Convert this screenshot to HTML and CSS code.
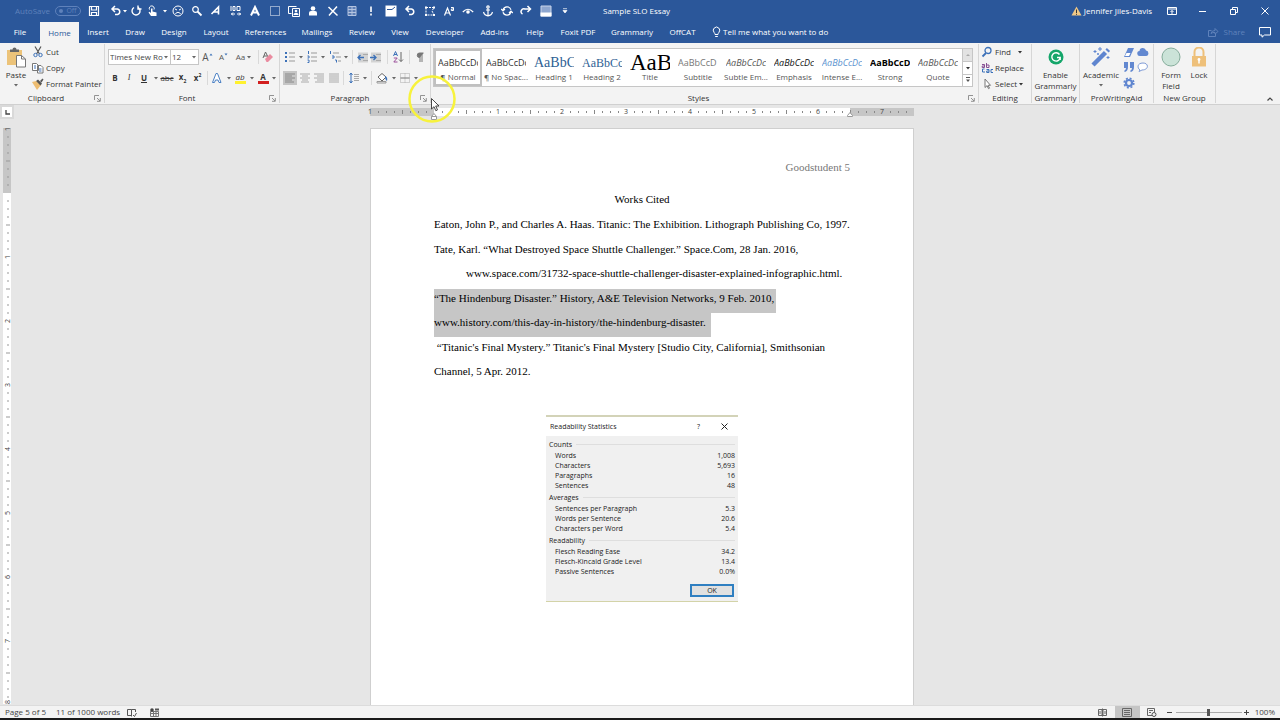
FILE: index.html
```
<!DOCTYPE html>
<html lang="en">
<head>
<meta charset="utf-8">
<title>Sample SLO Essay</title>
<link rel="stylesheet" href="styles.css">
</head>
<body>
<svg class="defs" aria-hidden="true">
  <symbol id="chev" viewBox="0 0 6 4"><path d="M1 1h4L3 3.4z" fill="currentColor"/></symbol>
  <symbol id="launch" viewBox="0 0 7 7"><path d="M.5 5V.5H5M3 3l3 3M6.300 3v3.300H3" fill="none" stroke="#888" stroke-width=".9"/></symbol>
  <symbol id="undo" viewBox="0 0 12 12"><path d="M2 4h5.500a2.800 2.800 0 0 1 0 5.500H5M5 1L2 4l3 3" fill="none" stroke="#fff" stroke-width="1.500"/></symbol>
</svg>

<header class="top">
  <div class="titlebar">
    <div class="autosave"><span>AutoSave</span><button class="toggle"><i></i>Off</button></div>
    <div class="qat-first">
      <button aria-label="Save"><svg width="12" height="12"><path d="M1.500 1.500h9v9h-9zM3.500 1.500v3.500h5V1.500M3.500 10.500V7.500h5v3" fill="none" stroke="#fff" stroke-width="1.200"/></svg></button>
      <button class="undo" aria-label="Undo"><svg width="12" height="12"><use href="#undo"/></svg></button>
      <button aria-label="Undo list"><svg width="6" height="4"><use href="#chev"/></svg></button>
      <button aria-label="Repeat"><svg width="12" height="12"><path d="M4 2.500a4 4 0 1 0 4.500.3M8 .5v3.500h3.500" fill="none" stroke="#fff" stroke-width="1.400"/></svg></button>
      <button aria-label="Touch mode"><svg width="12" height="12"><path d="M4 11L1.500 7.500l1-.8L4 8V3.500h1.500V6.500L9.500 7.500V11z" fill="#fff"/><path d="M2.500 4.500a2.500 2.500 0 1 1 4.500 0" fill="none" stroke="#fff"/></svg></button>
      <button aria-label="Touch list"><svg width="6" height="4"><use href="#chev"/></svg></button>
    </div>
    <div class="qat">
      <button aria-label="Frown"><svg width="12" height="12"><g fill="none" stroke="#fff"><circle cx="6" cy="6" r="5"/><path d="M3.500 9a2.700 2.700 0 0 1 5 0M3 4l2 1M9 4L7 5"/></g></svg></button>
      <button aria-label="Find"><svg width="12" height="12"><circle cx="4.500" cy="4.500" r="2.800" fill="none" stroke="#fff" stroke-width="1.200"/><path d="M6.500 6.500l4 4" stroke="#fff" stroke-width="1.800"/></svg></button>
      <button aria-label="Text effects"><svg width="12" height="12"><path d="M1.500 9L8.500 2v7.500M4 7h4.500" fill="none" stroke="#fff" stroke-width="1.600"/></svg></button>
      <button aria-label="Character spacing"><svg width="12" height="12"><g fill="none" stroke="#fff"><path d="M1 1v5M3 1.500h2v4H3zM7 1.500h3v4H7zM1 9h4M7 9h4M3 7.500L1.500 9 3 10.500M9 7.500L10.500 9 9 10.500"/></g></svg></button>
      <button aria-label="Font"><svg width="12" height="12"><path d="M2 10.500L6 2l4 8.500M4 7.500h4" fill="none" stroke="#fff" stroke-width="2"/></svg></button>
      <button aria-label="Select area"><svg width="12" height="12"><path d="M1.500 1.500h9v9h-9z" fill="none" stroke="#fff" stroke-dasharray="1 1"/></svg></button>
      <button aria-label="Contact card"><svg width="12" height="12"><path d="M3.500 8.500h-3v-7h8M4.500 3.500h7v8h-7z" fill="none" stroke="#fff"/><circle cx="8" cy="6" r="1.300" fill="#fff"/><path d="M5.500 10c0-3 5-3 5 0z" fill="#fff"/></svg></button>
      <button aria-label="Account"><svg width="12" height="12"><circle cx="6" cy="3.500" r="2.300" fill="#fff"/><path d="M2 10.500V8q0-2 2-2h4q2 0 2 2v2.500z" fill="#fff"/></svg></button>
      <button aria-label="Delete"><svg width="12" height="12"><path d="M1.500 2l9 8.500M10 1.500L2 10.500" stroke="#fff" stroke-width="1.500"/></svg></button>
      <button aria-label="Table"><svg width="12" height="12"><path d="M2 1.500h8v9H2zM2 4.500h8M2 7.500h8M6 1.500v9" fill="#5d7eb5" stroke="#b4c4e0"/></svg></button>
      <button aria-label="Important"><svg width="12" height="12"><path d="M6 1.500v5.500M6 8.500v2" stroke="#fff" stroke-width="1.600"/></svg></button>
      <button aria-label="Window"><svg width="12" height="12"><path d="M.5.500h11v11H.5z" fill="#fff"/><path d="M2 4.500h5l3-2.500" fill="none" stroke="#2b579a"/></svg></button>
      <button aria-label="Undo move"><svg width="12" height="12"><use href="#undo"/></svg></button>
      <button aria-label="Edit points"><svg width="12" height="12"><path d="M2 2.500h8L8 6l2 4H2z" fill="none" stroke="#fff" stroke-dasharray="2 1"/><path d="M1 1.500h2v2H1zM9 1.500h2v2H9zM1 9h2v2H1zM9 9h2v2H9z" fill="#fff"/></svg></button>
      <button aria-label="Superscript"><svg width="12" height="12"><path d="M1.500 10.500L4.500 3l3 7.500M2.500 8h4" fill="none" stroke="#fff" stroke-width="1.200"/><path d="M8 2.500h2.500v3H8.300V4h2" fill="none" stroke="#fff"/></svg></button>
      <button aria-label="View"><svg width="12" height="12"><path d="M.8 7Q6 1.500 11.200 7" fill="none" stroke="#fff" stroke-width="1.200"/><circle cx="6" cy="7" r="1.800" fill="#fff"/></svg></button>
      <button aria-label="Anchor"><svg width="12" height="12"><g fill="none" stroke="#fff" stroke-width="1.200"><circle cx="6" cy="2" r="1.200"/><path d="M6 3.500v7M4 5h4M1.500 7q1 3.500 4.500 3.800Q9.500 10.500 10.500 7"/></g></svg></button>
      <button aria-label="Refresh"><svg width="12" height="12"><path d="M2 5a4.200 4.200 0 0 1 8-.3M10 7a4.200 4.200 0 0 1-8 .3M0 4l2 2 2-2M8 8l2-2 2 2" fill="none" stroke="#fff" stroke-width="1.200"/></svg></button>
      <button aria-label="Redo"><svg width="12" height="12"><path d="M10 4H5a2.800 2.800 0 0 0-2.500 5M7.500 1l3 3-3 3" fill="none" stroke="#fff" stroke-width="1.500"/></svg></button>
      <button aria-label="Footer"><svg width="12" height="12"><path d="M1 1h10v10H1z" fill="#8ea7d0" stroke="#c9d5ea"/><path d="M.5 7.500h11v4H.5z" fill="#fff"/></svg></button>
      <button aria-label="Customize toolbar"><svg width="6" height="6"><path d="M1 .7h4M1 2.500h4L3 5z" stroke="#fff" stroke-width=".7" fill="#fff"/></svg></button>
    </div>
    <div class="doc-title">Sample SLO Essay</div>
    <div class="user"><svg width="11" height="10"><path d="M5.500.5L10.500 9.500H.5z" fill="#f0c886"/><path d="M5.500 3.500V7M5.500 7.800v1" stroke="#333"/></svg><span>Jennifer Jiles-Davis</span></div>
    <div class="winbtns">
      <button aria-label="Ribbon options"><svg width="10" height="8"><path d="M.5.500h9v7h-9zM.5 2h9M5 7V3.500M3.500 5L5 3.500 6.500 5" fill="none" stroke="#fff"/></svg></button>
      <button aria-label="Minimize"><svg width="8" height="8"><path d="M0 4.500h7" stroke="#fff"/></svg></button>
      <button aria-label="Restore"><svg width="8" height="8"><path d="M.5 2.500h5v5h-5zM2.500 2.500v-2h5v5h-2" fill="none" stroke="#fff"/></svg></button>
      <button aria-label="Close"><svg width="8" height="8"><path d="M.5.500l7 7M7.500.5l-7 7" stroke="#fff"/></svg></button>
    </div>
  </div>
  <nav class="tabs">
    <div class="tablist">
      <button>File</button><button class="active">Home</button><button>Insert</button><button>Draw</button><button>Design</button><button>Layout</button><button>References</button><button>Mailings</button><button>Review</button><button>View</button><button>Developer</button><button>Add-ins</button><button>Help</button><button>Foxit PDF</button><button>Grammarly</button><button>OffCAT</button>
    </div>
    <button class="tellme"><svg width="9" height="12"><path d="M3 8.500Q3 7.500 2 6.300a3.200 3.200 0 1 1 5 0Q6 7.500 6 8.500zM3.200 10.500h2.600" fill="none" stroke="#fff"/></svg>Tell me what you want to do</button>
    <button class="share"><svg width="11" height="10"><path d="M3.500 3.500h-3v6h7V7M3 6.500Q3.500 3.500 7 3.500V1.500L10 4.500 7 7V5.500Q4.500 5.200 3 6.500z" fill="none" stroke="#5f82bb"/></svg>Share</button>
    <button class="comment" aria-label="Comments"><svg width="12" height="11"><path d="M.5.500h11v7.500H5.500L3 10.200V8H.5z" fill="none" stroke="#fff"/></svg></button>
  </nav>
</header>

<section class="ribbon">
  <div class="group clipboard">
    <div class="body">
      <button class="big"><svg width="20" height="21"><path d="M1 3h15v15H1z" fill="#ecc379"/><path d="M4 2.500h2.500a2 2 0 0 1 4 0H13V5H4z" fill="#666"/><path d="M10.500 8.500h5l4 3.500v8h-9z" fill="#fff" stroke="#777"/><path d="M15.500 8.500V12h4" fill="none" stroke="#777"/></svg><span>Paste</span><svg class="cv" width="6" height="4"><use href="#chev"/></svg></button>
      <div class="smalls">
        <button><svg width="12" height="12"><path d="M3 .5L7.500 8M9 .5L4.500 8" stroke="#555" stroke-width="1.200"/><g fill="none" stroke="#3c71b8"><circle cx="3.500" cy="9" r="1.700"/><circle cx="8.500" cy="9" r="1.700"/></g></svg>Cut</button>
        <button><svg width="12" height="12"><path d="M.5 1.500h4l2 2v5h-6zM5.500 3.500h3.500l2 2v5.500h-5.500z" fill="#fff" stroke="#777"/><path d="M2 4h2M2 6h2M7 7h2.500M7 9h2.500" stroke="#3c71b8"/></svg>Copy</button>
        <button><svg width="12" height="12"><path d="M0 4l4-1 5 4-4 5z" fill="#edbd72"/><path d="M4 3l2-1.500 4 4L8.500 7.500zM8 3l2.500-2.500 1 1L9.500 4.500z" fill="#555"/></svg>Format Painter</button>
      </div>
    </div>
    <footer>Clipboard<svg width="7" height="7"><use href="#launch"/></svg></footer>
  </div>

  <div class="group font">
    <div class="body rows">
      <div class="row font-top">
        <label class="combo"><select aria-label="Font"><option>Times New Ro</option></select><svg width="6" height="4"><use href="#chev"/></svg></label>
        <label class="combo size"><select aria-label="Font size"><option>12</option></select><svg width="6" height="4"><use href="#chev"/></svg></label>
        <button class="lt" aria-label="Grow font">A<svg width="4" height="8"><path d="M.5 2.500L2 .5l1.500 2z" fill="#3c71b8"/></svg></button>
        <button class="lt sm" aria-label="Shrink font">A<svg width="4" height="8"><path d="M.5.500L2 2.500 3.500.5z" fill="#3c71b8"/></svg></button>
        <button class="lt sm">Aa<svg width="8" height="4"><use href="#chev"/></svg></button>
        <i class="sep"></i>
        <button aria-label="Clear formatting"><svg width="12" height="12"><path d="M1 7L3.500 1 6 6M2 5h3" fill="none" stroke="#666"/><path d="M3 8l5-5 3 3-5 5H4.500z" fill="#ea8ba0"/></svg></button>
      </div>
      <div class="row font-bottom">
        <button><b>B</b></button><button><em>I</em></button><button><u>U</u></button><button aria-label="Underline styles"><svg width="6" height="4"><use href="#chev"/></svg></button>
        <button><s>abc</s></button><button><b>x<sub>2</sub></b></button><button><b>x<sup>2</sup></b></button><i class="sep"></i>
        <button aria-label="Text effects"><svg width="12" height="12"><path d="M1.500 10.500L5 1.500h1.500L10 10.500H8L7 8H4.500l-1 2.500z" fill="#fff" stroke="#4a80c4"/></svg></button><button aria-label="Effects list"><svg width="6" height="4"><use href="#chev"/></svg></button>
        <button class="mark" aria-label="Highlight">ab</button><button aria-label="Highlight list"><svg width="6" height="4"><use href="#chev"/></svg></button>
        <button class="mark red" aria-label="Font color">A</button><button aria-label="Color list"><svg width="6" height="4"><use href="#chev"/></svg></button>
      </div>
    </div>
    <footer>Font<svg width="7" height="7"><use href="#launch"/></svg></footer>
  </div>

  <div class="group paragraph">
    <div class="body rows">
      <div class="row para-top">
        <button aria-label="Bullets"><svg width="10" height="12"><path d="M0 2h2M0 6h2M0 10h2" stroke="#3c71b8" stroke-width="2"/><path d="M4 2h6M4 6h6M4 10h6" stroke="#999"/></svg></button><button aria-label="Bullet list"><svg width="6" height="4"><use href="#chev"/></svg></button>
        <button aria-label="Numbering"><svg width="10" height="12"><path d="M1.500 0v3M.5 5h1.500v2H.5M.5 9h1.500v2.500H.5" stroke="#3c71b8" fill="none"/><path d="M4 2h6M4 6h6M4 10h6" stroke="#999"/></svg></button><button aria-label="Number list"><svg width="6" height="4"><use href="#chev"/></svg></button>
        <button aria-label="Multilevel"><svg width="12" height="12"><path d="M1.500 0v3M3 5h2v2H3M6 9h1.500v2.500" stroke="#3c71b8" fill="none"/><path d="M4 2h6M7 6h5M9 10h3" stroke="#999"/></svg></button><button aria-label="Multilevel list"><svg width="6" height="4"><use href="#chev"/></svg></button>
        <i class="sep"></i>
        <button aria-label="Decrease indent"><svg width="12" height="11"><path d="M1 .5h10v10H1z" fill="#d3d3d3"/><path d="M6 2.500h5M6 8.500h5" stroke="#aaa"/><path d="M7 5.500H1M3.500 3L1 5.500 3.500 8" fill="none" stroke="#3c71b8" stroke-width="1.300"/></svg></button>
        <button aria-label="Increase indent"><svg width="12" height="11"><path d="M1 .5h10v10H1z" fill="#d3d3d3"/><path d="M6 2.500h5M6 8.500h5" stroke="#aaa"/><path d="M0 5.500h6M3.500 3L6 5.500 3.500 8" fill="none" stroke="#3c71b8" stroke-width="1.300"/></svg></button>
        <i class="sep"></i>
        <button aria-label="Sort"><svg width="11" height="12"><path d="M.5 5l2-4.500 2 4.500M1 3.500h3" fill="none" stroke="#3c71b8"/><path d="M.8 7h3.400L.8 11h3.700" fill="none" stroke="#9a4f9a"/><path d="M8 1v9.500M6 8.500l2 2 2-2" fill="none" stroke="#666"/></svg></button>
        <i class="sep"></i>
        <button aria-label="Show marks"><svg width="8" height="11"><path d="M4 1v9M6 1v9M7.500 1H3.500a2 2 0 0 0 0 4.500H4" fill="#777" stroke="#777"/></svg></button>
      </div>
      <div class="row para-bottom">
        <button class="on" aria-label="Align left"><svg width="10" height="10"><path d="M0 1h10M0 3h7M0 5h10M0 7h7M0 9h9" stroke="#888"/></svg></button>
        <button aria-label="Center"><svg width="10" height="10"><path d="M0 1h10M2 3h6M0 5h10M2 7h6M1 9h8" stroke="#aaa"/></svg></button>
        <button aria-label="Align right"><svg width="10" height="10"><path d="M0 1h10M3 3h7M0 5h10M3 7h7M1 9h9" stroke="#aaa"/></svg></button>
        <button aria-label="Justify"><svg width="10" height="10"><path d="M0 1h10M0 3h10M0 5h10M0 7h10M0 9h10" stroke="#aaa"/></svg></button>
        <i class="sep"></i>
        <button aria-label="Line spacing"><svg width="10" height="12"><path d="M2 1v10M.5 3L2 1l1.500 2M.5 9L2 11l1.500-2" fill="none" stroke="#3c71b8"/><path d="M5 2.500h5M5 4.500h5M5 6.500h5M5 8.500h5" stroke="#aaa"/></svg></button><button aria-label="Spacing list"><svg width="6" height="4"><use href="#chev"/></svg></button>
        <i class="sep"></i>
        <button aria-label="Shading"><svg width="12" height="12"><path d="M2 5l4-3.500L10 5 6 9z" fill="#fff" stroke="#666"/><path d="M9 4q3 1 2 5Q9 8 9 4z" fill="#3c71b8"/><path d="M1 9.500h9v1.500H1z" fill="none" stroke="#999"/></svg></button><button aria-label="Shading list"><svg width="6" height="4"><use href="#chev"/></svg></button>
        <button aria-label="Borders"><svg width="10" height="10"><path d="M.5.500h9v9h-9zM5 .5v9" fill="none" stroke="#aaa" stroke-dasharray="1 1"/><path d="M.5 5h9" stroke="#777"/></svg></button><button aria-label="Borders list"><svg width="6" height="4"><use href="#chev"/></svg></button>
      </div>
    </div>
    <footer>Paragraph<svg width="7" height="7"><use href="#launch"/></svg></footer>
  </div>

  <div class="group styles">
    <div class="gallery">
      <button class="picked"><span>AaBbCcDc</span><small>¶ Normal</small></button>
      <button><span>AaBbCcDc</span><small>¶ No Spac...</small></button>
      <button><span class="h1">AaBbC</span><small>Heading 1</small></button>
      <button><span class="h2">AaBbCcl</span><small>Heading 2</small></button>
      <button><span class="ti">AaB</span><small>Title</small></button>
      <button><span class="gray">AaBbCcD</span><small>Subtitle</small></button>
      <button><span class="it">AaBbCcDc</span><small>Subtle Em...</small></button>
      <button><span class="it dark">AaBbCcDc</span><small>Emphasis</small></button>
      <button><span class="it blue">AaBbCcDc</span><small>Intense E...</small></button>
      <button><span class="st">AaBbCcDc</span><small>Strong</small></button>
      <button><span class="it">AaBbCcDc</span><small>Quote</small></button>
      <div class="gscroll">
        <button class="off" aria-label="Previous styles"><svg width="6" height="4"><path d="M1 3h4L3 1z" fill="#aaa"/></svg></button>
        <button aria-label="Next styles"><svg width="6" height="4"><use href="#chev"/></svg></button>
        <button aria-label="More styles"><svg width="6" height="6"><path d="M1 .5h4" stroke="#555"/><path d="M1 2.500h4L3 5z" fill="#555"/></svg></button>
      </div>
    </div>
    <footer>Styles<svg width="7" height="7"><use href="#launch"/></svg></footer>
  </div>

  <div class="group editing">
    <div class="body smalls">
      <button><svg width="12" height="12"><circle cx="7" cy="4.500" r="3" fill="none" stroke="#3c71b8" stroke-width="1.300"/><path d="M5 7L1.500 10.500" stroke="#3c71b8" stroke-width="1.800"/></svg>Find<svg class="far" width="6" height="4"><use href="#chev"/></svg></button>
      <button><svg width="12" height="12"><path d="M1 2.500h2.500v3H1.200V4h2.300M5.500 1v4.500H8V3H5.500" fill="none" stroke="#874f93"/><path d="M5.500 7.500H8v3H5.700V9H8M12 7.500h-2v3h2M3.500 7H1.500v3H4" fill="none" stroke="#3c71b8"/></svg>Replace</button>
      <button><svg width="12" height="12"><path d="M4 1v8.500l2-1.800 1.500 3 1-.5L7 7.300h2.500z" fill="#fff" stroke="#777"/></svg>Select<svg class="near" width="6" height="4"><use href="#chev"/></svg></button>
    </div>
    <footer>Editing</footer>
  </div>

  <div class="group gram">
    <div class="body">
      <button class="big"><svg width="20" height="21"><circle cx="10" cy="10" r="7.500" fill="#15a66a"/><path d="M13.500 7.500a4.200 4.200 0 1 0 .7 3H11M14.200 10.500v2.500" fill="none" stroke="#fff" stroke-width="1.400"/></svg><span>Enable<br>Grammarly</span></button>
    </div>
    <footer>Grammarly</footer>
  </div>

  <div class="group pwa">
    <div class="body">
      <button class="big"><svg width="20" height="21"><path d="M2 18L14.500 5.500" stroke="#5f85cf" stroke-width="4.500"/><path d="M16 4l1.500-1.500" stroke="#5f85cf" stroke-width="4.500"/><path d="M4 3v3M2.500 4.500h3M9 0v4M7 2h4M17 9v3M15.500 10.500h3M7 6v2M6 7h2" stroke="#5f85cf"/></svg><span>Academic</span><svg class="cv" width="6" height="4"><use href="#chev"/></svg></button>
      <div class="tools">
        <button aria-label="Eraser"><svg width="12" height="11"><path d="M5 1h6L7 10H1z" fill="#6288d0"/><path d="M3.500 6L2 9h4l1.500-3z" fill="#fff"/></svg></button>
        <button aria-label="Cloud"><svg width="12" height="10"><path d="M3 9a2.500 2.500 0 0 1-.5-5A3.300 3.300 0 0 1 9 3.500 2.800 2.800 0 0 1 9.300 9z" fill="#6288d0"/></svg></button>
        <button aria-label="Quotes"><svg width="12" height="10"><path d="M1 0h4v5q0 4-3 5l-1-1q2-1 2-3H1zM7 0h4v5q0 4-3 5l-1-1q2-1 2-3H7z" fill="#6288d0"/></svg></button>
        <button aria-label="Chat"><svg width="12" height="10"><path d="M3 8L2 9.500 5 8C12 8 12 1 6 1S0 6 3 8z" fill="#fff" stroke="#7d9ad6"/></svg></button>
        <button aria-label="Settings"><svg width="12" height="12"><circle cx="6" cy="6" r="3" fill="none" stroke="#5f85cf" stroke-width="2.200"/><circle cx="6" cy="6" r="4.800" fill="none" stroke="#5f85cf" stroke-width="1.600" stroke-dasharray="2 1.770"/></svg></button>
      </div>
    </div>
    <footer>ProWritingAid</footer>
  </div>

  <div class="group newgroup">
    <div class="body">
      <button class="big"><svg width="20" height="21"><circle cx="10" cy="10" r="9" fill="#cbe3d8" stroke="#86ad9c"/></svg><span>Form<br>Field</span></button>
      <button class="big"><svg width="20" height="21"><path d="M5.500 9V5a4.500 4.500 0 0 1 9 0v4" fill="none" stroke="#eec07a" stroke-width="2"/><path d="M3 9h14v10.500H3z" fill="#eec07a"/><path d="M10 12v4.500" stroke="#fff" stroke-width="1.500"/><circle cx="10" cy="12.500" r="1.400" fill="#fff"/></svg><span>Lock</span></button>
    </div>
    <footer>New Group</footer>
  </div>
  <button class="collapse" aria-label="Collapse ribbon"><svg width="6" height="4"><path d="M.5 3.500L3 1l2.500 2.500" fill="none" stroke="#444" stroke-width="1.200"/></svg></button>
</section>

<main class="workspace">
  <div class="vside">
    <button class="tabstop" aria-label="Tab selector"><svg width="5" height="5"><path d="M1 0v4h4" fill="none" stroke="#444" stroke-width="1.300"/></svg></button>
    <svg class="vruler" width="8" height="576">
      <defs><pattern id="vt" width="8" height="64" patternUnits="userSpaceOnUse" y="1"><path d="M4 8h2M4 16h2M4 24h2M3 32h4M4 40h2M4 48h2M4 56h2" stroke="#999"/></pattern></defs>
      <path d="M0 0h8v65H0z" fill="#c6c6c6"/><path d="M0 65h8v511H0z" fill="#fff"/><path d="M0 0h8v576H0z" fill="url(#vt)"/>
      <g transform="rotate(-90)"><text x="-1" y="7">1</text><text x="-129" y="7">1</text><text x="-193" y="7">2</text><text x="-257" y="7">3</text><text x="-321" y="7">4</text><text x="-385" y="7">5</text><text x="-449" y="7">6</text><text x="-513" y="7">7</text><text x="-574" y="7">8</text></g>
    </svg>
  </div>
  <div class="canvas">
    <svg class="hruler" width="544" height="15">
      <defs><pattern id="ht" width="64" height="15" patternUnits="userSpaceOnUse"><path d="M8.500 6v2M16.500 6v2M24.500 6v2M32.500 5v4M40.500 6v2M48.500 6v2M56.500 6v2" stroke="#888"/></pattern></defs>
      <path d="M0 3h544v8H0z" fill="#c6c6c6"/><path d="M64 3h416v8H64z" fill="#fff"/><path d="M0 3h544v8H0z" fill="url(#ht)"/>
      <text x="0" y="9">1</text><text x="128" y="9">1</text><text x="192" y="9">2</text><text x="256" y="9">3</text><text x="320" y="9">4</text><text x="384" y="9">5</text><text x="448" y="9">6</text><text x="512" y="9">7</text>
      <path d="M61.500 14.500v-3L64 8.500l2.500 3v3zM61.500 11.500h5M477.500 11.500v-1L480 7.500l2.500 3v1z" fill="#fff" stroke="#999"/>
    </svg>
    <article class="page">
      <div class="page-header">Goodstudent 5</div>
      <h1>Works Cited</h1>
      <p>Eaton, John P., and Charles A. Haas. Titanic: The Exhibition. Lithograph Publishing Co, 1997.</p>
      <p class="hang">Tate, Karl. “What Destroyed Space Shuttle Challenger.” Space.Com, 28 Jan. 2016,<br>www.space.com/31732-space-shuttle-challenger-disaster-explained-infographic.html.</p>
      <p class="selected"><mark>“The Hindenburg Disaster.” History, A&amp;E Television Networks, 9 Feb. 2010,</mark><mark class="end">www.history.com/this-day-in-history/the-hindenburg-disaster.</mark></p>
      <p>&nbsp;“Titanic's Final Mystery.” Titanic's Final Mystery [Studio City, California], Smithsonian<br>Channel, 5 Apr. 2012.</p>
      <section class="dialog">
        <div class="dtitle"><span>Readability Statistics</span><button aria-label="Help">?</button><button aria-label="Close"><svg width="7" height="7"><path d="M.5.500l6 6M6.500.5l-6 6" stroke="#222"/></svg></button></div>
        <table>
          <tbody><tr><th colspan="2"><span>Counts</span></th></tr>
          <tr><td>Words</td><td>1,008</td></tr><tr><td>Characters</td><td>5,693</td></tr><tr><td>Paragraphs</td><td>16</td></tr><tr><td>Sentences</td><td>48</td></tr></tbody>
          <tbody><tr><th colspan="2"><span>Averages</span></th></tr>
          <tr><td>Sentences per Paragraph</td><td>5.3</td></tr><tr><td>Words per Sentence</td><td>20.6</td></tr><tr><td>Characters per Word</td><td>5.4</td></tr></tbody>
          <tbody><tr><th colspan="2"><span>Readability</span></th></tr>
          <tr><td>Flesch Reading Ease</td><td>34.2</td></tr><tr><td>Flesch-Kincaid Grade Level</td><td>13.4</td></tr><tr><td>Passive Sentences</td><td>0.0%</td></tr></tbody>
        </table>
        <button class="ok">OK</button>
      </section>
    </article>
  </div>
</main>

<footer class="status">
  <span>Page 5 of 5</span><span>11 of 1000 words</span>
  <button aria-label="Proofing"><svg width="10" height="9"><path d="M4.500 1.500H.5v6h4M4.500 1.500v7M4.500 1.500h4V4M6 7l1.500 1.500L9.500 5" fill="none" stroke="#555"/></svg></button>
  <button class="macro" aria-label="Macros"><svg width="9" height="9"><path d="M.5 3.500h8v5h-8zM.5 5.500h8M3.500 3.500v5M6 3.500v5" fill="none" stroke="#777"/><circle cx="2" cy="2" r="1.800" fill="#444"/><path d="M5 1.500h4" stroke="#555" stroke-width="2"/></svg></button>
  <div class="views">
    <button aria-label="Read mode"><svg width="9" height="9"><path d="M.5 1.500h3.500v6H.5zM5 1.500h3.500v6H5zM4.500.5v8M2 3v3M7 3v3" fill="none" stroke="#666"/></svg></button>
    <button class="on" aria-label="Print layout"><svg width="10" height="9"><path d="M.5.500h9v8h-9zM2 2.500h6M2 4.500h6M2 6.500h6" fill="none" stroke="#666"/></svg></button>
    <button aria-label="Web layout"><svg width="10" height="9"><path d="M5 7.500H.5v-7h7V4M2 2.500h4M2 4.500h2" fill="none" stroke="#666"/><circle cx="7" cy="6.500" r="2" fill="none" stroke="#555"/></svg></button>
  </div>
  <button class="zm" aria-label="Zoom out"><svg width="5" height="5"><path d="M0 2.500h5" stroke="#444"/></svg></button>
  <input type="range" min="0" max="100" value="50" aria-label="Zoom">
  <button class="zm" aria-label="Zoom in"><svg width="5" height="5"><path d="M0 2.500h5M2.500 0v5" stroke="#444"/></svg></button>
  <span class="pct">100%</span>
</footer>

<svg class="pointer" width="48" height="48" aria-hidden="true"><circle cx="24" cy="24" r="22.500" fill="none" stroke="#f7f23c" stroke-width="2.500"/><path d="M23.500 23.500v10.500l2.500-2.300 1.800 4 1.700-.8-1.800-3.900h3.300z" fill="#fff" stroke="#333" stroke-width=".9"/></svg>
</body>
</html>
```
FILE: styles.css
```
* { box-sizing: border-box; }
body {
  margin: 0; height: 100vh; display: flex; flex-direction: column; overflow: hidden;
  background: #e6e6e6; color: #333; position: relative;
  font: 8px/10px "Open Sans", "Noto Sans", sans-serif;
}
button { border: 0; padding: 0; margin: 0; background: none; font: inherit; color: inherit; display: flex; align-items: center; justify-content: center; white-space: nowrap; }
svg { display: block; flex: none; }
.defs { position: absolute; width: 0; height: 0; }

.top { background: #2b579a; color: #fff; flex: none; }
.titlebar { height: 22px; display: flex; align-items: center; }
.autosave { width: 83px; padding-left: 15px; display: flex; align-items: center; gap: 5px; color: #5f82bb; }
.toggle { width: 26px; height: 10px; border: 1px solid #5f82bb; border-radius: 5px; font-size: 7px; gap: 3px; }
.toggle i { width: 4px; height: 4px; border-radius: 2px; background: #5f82bb; }
.qat-first { display: grid; grid-template-columns: 22px 17px 6px 16px 17px 7px; }
.qat-first .undo { justify-content: flex-end; }
.qat { width: 407px; display: flex; justify-content: space-between; }
.qat button { width: 20px; }
.doc-title { margin-left: 28px; flex: 1; }
.user { display: flex; align-items: center; gap: 2px; margin-right: 4px; }
.winbtns { display: grid; grid-template-columns: repeat(4, 31px); }
.tabs { height: 21px; display: flex; align-items: center; padding-bottom: 1px; }
.tablist { display: grid; grid-template-columns: 40px 39px 38px 36px 42px 42px 57px 46px 44px 32px 58px 41px 40px 46px 62px 39px; align-self: stretch; }
.tablist .active { background: #f3f3f3; color: #2b579a; margin-bottom: -1px; }
.tellme { margin-left: 10px; gap: 2px; margin-right: auto; }
.share { gap: 5px; color: #5f82bb; margin-right: 14px; }
.comment { margin-right: 9px; }

.ribbon { background: #f3f3f3; height: 62px; flex: none; display: flex; border-bottom: 1px solid #d0d0d0; padding: 1px 0; }
.group { display: flex; flex-direction: column; border-right: 1px solid #d6d6d6; }
.group .body { flex: 1; display: flex; }
.group > footer { height: 11px; margin-top: auto; display: flex; align-items: center; justify-content: center; position: relative; }
.group > footer svg { position: absolute; right: 3px; bottom: 1px; }
.clipboard { width: 105px; }
.clipboard > footer { padding-right: 12px; }
.font { width: 175px; }
.font > footer, .paragraph > footer { padding-right: 10px; }
.paragraph { width: 151px; }
.styles { flex: 1; padding-left: 2px; }
.styles > footer { padding-right: 14px; }
.editing { width: 53px; }
.gram { width: 48px; }
.pwa { width: 74px; }
.newgroup { width: 62px; }
.big { flex-direction: column; justify-content: flex-start; text-align: center; padding-top: 3px; line-height: 11px; }
.big span { margin-top: 1px; }
.big .cv { margin-top: 3px; color: #666; }
.clipboard .big { width: 32px; }
.smalls { display: flex; flex-direction: column; }
.smalls, .group .body.smalls { flex-direction: column; }
.smalls button { height: 16px; justify-content: flex-start; gap: 2px; }
.smalls button:last-child { height: 15px; }
.editing .smalls { padding-left: 2px; }
.smalls .far { margin-left: 4px; }
.smalls .near { margin-left: -1px; }
.gram .big, .pwa .big { flex: 1; }
.tools { display: grid; grid-template-columns: 14px 14px; grid-template-rows: 14px 16px 15px; margin: 1px 3px 0 0; }
.newgroup .big { width: 28px; }
.newgroup .body { padding-left: 3px; }
.newgroup + .collapse { width: 57px; justify-content: flex-end; margin: auto 7px 2px auto; }

.group .rows { flex-direction: column; padding-left: 3px; }
.row { display: grid; height: 20px; align-items: center; }
.row:first-child { padding-top: 2px; height: 24px; }
.row svg { color: #666; }
.font-top { grid-template-columns: 63px 28px 17px 15px 27px 1px 18px; }
.font-bottom { grid-template-columns: 14px 14px 16px 7px 16px 15px 15px 4px 16px 7px 16px 7px 16px 6px; }
.para-top { grid-template-columns: 14px 8px 14px 8px 16px 6px 7px 13px 14px 8px 14px 8px 14px; }
.para-bottom { grid-template-columns: 14px 15px 14px 15px 5px 16px 6px 6px 16px 7px 16px 6px; }
.sep { width: 1px; height: 14px; background: #d9d9d9; justify-self: center; }
.combo { position: relative; height: 16px; border: 1px solid #c6c6c6; background: #fff; display: flex; }
.combo.size { margin-left: -1px; }
.combo select { appearance: none; border: 0; margin: 0; padding: 0 0 0 1px; width: 100%; background: none; font: inherit; color: #444; }
.combo svg { position: absolute; right: 1px; top: 5px; }
.lt { font-size: 10px; color: #555; }
.lt.sm { font-size: 8px; }
.row b, .row em, .row u { font-size: 8px; }
.row u { font-weight: 700; }
.row em { font-family: "Liberation Serif", serif; }
.row sub, .row sup { font-size: 5px; line-height: 1; }
.row .mark { border-bottom: 3px solid #fff12e; line-height: 8px; font-style: italic; justify-self: center; width: 11px; height: 12px; }
.row .mark.red { border-color: #d21f1f; font-style: normal; font-weight: 700; }
.on { background: #c5c5c5; align-self: stretch; }
.row .on { height: 14px; align-self: center; }

.gallery { margin-top: 4px; height: 39px; border: 1px solid #c6c6c6; background: #fff; display: flex; width: 540px; max-width: 100%; }
.gallery > button { width: 48px; flex-direction: column; justify-content: flex-start; padding: 5px 4px 0; font-size: 9px; color: #333; }
.gallery span { height: 18px; width: 100%; display: flex; align-items: center; overflow: hidden; }
.gallery small { font-size: 8px; line-height: 10px; color: #555; }
.gallery .picked { border: 2px solid #c0c0c0; padding: 3px 2px 0; }
.gallery .h1, .gallery .h2, .gallery .ti { font-family: "Liberation Serif", serif; color: #2e5f94; font-size: 14px; }
.gallery .h2 { font-size: 12px; }
.gallery .ti { color: #000; font-size: 23px; line-height: 18px; }
.gallery .gray { color: #777; }
.gallery .it { font-style: italic; color: #555; }
.gallery .dark { color: #111; }
.gallery .blue { color: #5b93cf; }
.gallery .st { font-weight: 700; color: #000; }
.gscroll { flex: 1; display: grid; grid-template-rows: repeat(3, 1fr); border-left: 1px solid #c6c6c6; }
.gscroll button + button { border-top: 1px solid #c6c6c6; }
.gscroll .off { background: #e3e3e3; }

.workspace { flex: 1; min-height: 0; display: flex; overflow: hidden; }
.vside { width: 14px; flex: none; }
.tabstop { width: 14px; height: 14px; background: #fff; border: 2px solid #d9d9d9; }
.vruler { margin: 9px 0 0 3px; }
.vruler text, .hruler text { font: 7px "Open Sans", sans-serif; fill: #444; text-anchor: middle; }
.canvas { flex: 1; display: flex; flex-direction: column; align-items: center; padding-right: 10px; min-width: 0; }
.hruler { flex: none; overflow: visible; }
.page { width: 544px; margin-top: 8px; flex: 1 0 auto; background: #fff; border: 1px solid #cfcfcf; border-bottom: 0; padding: 29px 63px 0; font: 11px/24px "Liberation Serif", serif; color: #000; white-space: nowrap; }
.page-header { text-align: right; line-height: 18px; color: #777; margin-bottom: 11px; }
h1, .page p { font-size: 11px; font-weight: 400; margin: 0 0 1px; }
h1 { text-align: center; }
.hang { padding-left: 32px; text-indent: -32px; }
.page .selected { padding-top: 3px; margin-bottom: -2px; }
mark { display: block; width: fit-content; background: #c6c6c6; color: #000; line-height: 18px; padding: 0 2px 6px 0; }
mark.end { padding-right: 5px; }

.dialog { width: 192px; margin: 32px auto 0; background: #f0f0f0; border-top: 2px solid #d3d3b8; border-bottom: 1px solid #d3d3a8; font: 7px/10px "Open Sans", "Noto Sans", sans-serif; color: #222; padding-bottom: 4px; }
.dtitle { background: #fff; height: 19px; display: flex; align-items: center; padding: 0 5px 0 4px; }
.dtitle span { flex: 1; }
.dtitle button { width: 17px; margin-left: 9px; }
.dialog table { width: 100%; border-collapse: collapse; margin-top: 2px; }
.dialog td { padding: 0 3px 0 9px; height: 10px; }
.dialog td + td { text-align: right; }
.dialog th { height: 13px; padding: 0 3px; font-weight: 400; text-align: left; }
.dialog th span { display: flex; align-items: center; gap: 4px; }
.dialog th span::after { content: ""; flex: 1; height: 1px; background: #dedede; }
.ok { width: 44px; height: 13px; margin: 7px 4px 0 auto; border: 2px solid #2f7fc1; background: #e1e1e1; }

.status { height: 15px; flex: none; background: #f3f3f3; border-top: 1px solid #dcdcdc; border-bottom: 2px solid #1a1a1a; display: flex; align-items: center; padding: 0 5px; color: #444; }
.status > span + span { margin-left: 10px; }
.status > button { margin-left: 7px; }
.status > .macro { margin-left: 13px; }
.views { margin-left: auto; display: grid; grid-template-columns: 25px 25px 25px; align-self: stretch; }
.status > .zm { margin-left: 2px; width: 6px; }
.status input { appearance: none; width: 66px; height: 8px; margin: 0 0 0 3px; background: linear-gradient(#aaa, #aaa) center / 100% 1px no-repeat; }
.status input::-webkit-slider-thumb { appearance: none; width: 3px; height: 7px; background: #555; }
.status > .pct { margin-left: 5px; }

.pointer { position: absolute; left: 408px; top: 75px; }
```
